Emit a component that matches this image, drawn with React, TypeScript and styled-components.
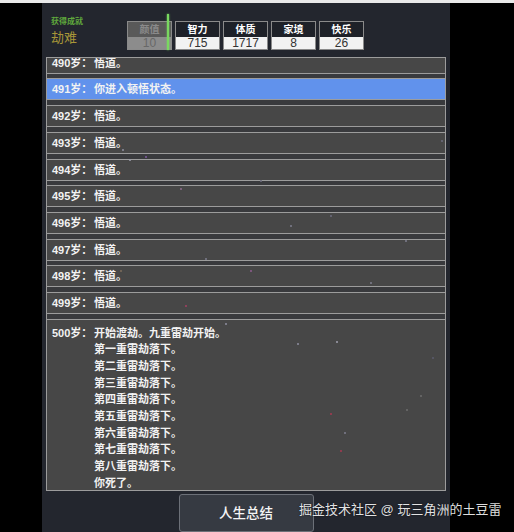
import React from 'react';
import styled, { createGlobalStyle } from 'styled-components';

const GlobalStyle = createGlobalStyle`
  html, body {
    margin: 0;
    padding: 0;
    background: #000;
    overflow: hidden;
  }
  body {
    font-family: "Liberation Sans", "Noto Sans CJK SC", sans-serif;
  }
`;

const stats = [
  { label: '颜值', value: 10, dim: true },
  { label: '智力', value: 715 },
  { label: '体质', value: 1717 },
  { label: '家境', value: 8 },
  { label: '快乐', value: 26 },
];

const events: { age: number; lines: string[]; active?: boolean }[] = [
  { age: 490, lines: ['悟道。'] },
  { age: 491, lines: ['你进入顿悟状态。'], active: true },
  { age: 492, lines: ['悟道。'] },
  { age: 493, lines: ['悟道。'] },
  { age: 494, lines: ['悟道。'] },
  { age: 495, lines: ['悟道。'] },
  { age: 496, lines: ['悟道。'] },
  { age: 497, lines: ['悟道。'] },
  { age: 498, lines: ['悟道。'] },
  { age: 499, lines: ['悟道。'] },
  {
    age: 500,
    lines: [
      '开始渡劫。九重雷劫开始。',
      '第一重雷劫落下。',
      '第二重雷劫落下。',
      '第三重雷劫落下。',
      '第四重雷劫落下。',
      '第五重雷劫落下。',
      '第六重雷劫落下。',
      '第七重雷劫落下。',
      '第八重雷劫落下。',
      '你死了。',
    ],
  },
];

const sparks = [
  [122, 149, '#8a8a9a'], [129, 159, '#9a9aa8'], [145, 156, '#7a5a9a'], [441, 140, '#6a6a7a'],
  [180, 188, '#8a6a8a'], [205, 258, '#7a7a8a'], [185, 305, '#a04060'], [290, 225, '#7a7a8a'],
  [330, 215, '#6a6a7a'], [370, 282, '#7a7a8a'], [225, 323, '#8a8a9a'], [297, 343, '#8a8a9a'],
  [336, 341, '#9a9aa8'], [330, 413, '#a03a50'], [340, 450, '#a03a50'], [344, 432, '#7a7a8a'],
  [420, 395, '#6a6a6a'], [406, 409, '#6a6a6a'], [432, 357, '#5a5a6a'], [250, 270, '#8a5a8a'],
  [405, 240, '#7a7a8a'], [150, 420, '#6a6a6a'], [260, 180, '#6a6a7a'], [120, 270, '#7a6a5a'],
] as const;

const App = () => {
  return (
    <>
      <GlobalStyle />
      <TopBar />
      <Screen>
        <Side />
        <Panel>
          <Header>
            <Achievement>
              <small>获得成就</small>
              <span>劫难</span>
            </Achievement>
            <Stats>
              {stats.map((s) => (
                <StatBox key={s.label} $dim={s.dim}>
                  <StatLabel>{s.label}</StatLabel>
                  <StatValue>{s.value}</StatValue>
                  {s.dim && <Wipe />}
                </StatBox>
              ))}
            </Stats>
          </Header>
          <List>
            <Scroll>
              {events.map((e) => (
                <Row key={e.age} $active={e.active} $tall={e.lines.length > 1}>
                  <Age>{e.age}岁：</Age>
                  <Lines>
                    {e.lines.map((l, i) => (
                      <div key={i}>{l}</div>
                    ))}
                  </Lines>
                </Row>
              ))}
            </Scroll>
          </List>
          <Footer>
            <SummaryButton>人生总结</SummaryButton>
          </Footer>
        </Panel>
        <Side />
      </Screen>
      <Sparks width="514" height="532">
        {sparks.map(([x, y, c], i) => (
          <rect key={i} x={x} y={y} width="2" height="2" fill={c} opacity="0.8" />
        ))}
      </Sparks>
      <Watermark>掘金技术社区 @ 玩三角洲的土豆雷</Watermark>
    </>
  );
};

const TopBar = styled.div`
  height: 3px;
  background: #e9e9e9;
`;

const Screen = styled.div`
  display: flex;
  height: 529px;
`;

const Side = styled.div`
  flex: 1;
  background: #000;
  &:first-child {
    flex: 0 0 42px;
  }
`;

const Panel = styled.div`
  flex: 0 0 408px;
  background: #23262e;
  display: flex;
  flex-direction: column;
  padding: 0 4px;
  box-sizing: border-box;
`;

const Header = styled.div`
  height: 54px;
  display: flex;
  align-items: flex-start;
`;

const Achievement = styled.div`
  width: 81px;
  padding: 13px 0 0 5px;
  box-sizing: border-box;
  display: flex;
  flex-direction: column;
  small {
    font-size: 8px;
    line-height: 11px;
    font-weight: bold;
    color: #5fa83c;
  }
  span {
    margin-top: 3px;
    font-size: 13px;
    line-height: 16px;
    color: #a89638;
  }
`;

const Stats = styled.div`
  margin-top: 18px;
  display: flex;
  gap: 3px;
`;

const StatBox = styled.div<{ $dim?: boolean }>`
  position: relative;
  width: 45px;
  display: flex;
  flex-direction: column;
  & > div:first-child {
    background: ${(p) => (p.$dim ? '#595959' : '#1e2128')};
    color: ${(p) => (p.$dim ? '#8a8a8a' : '#fff')};
  }
  & > div:nth-child(2) {
    background: ${(p) => (p.$dim ? '#8c8c8c' : '#f2f2f2')};
    color: ${(p) => (p.$dim ? '#686868' : '#333')};
  }
`;

const StatLabel = styled.div`
  height: 16px;
  border: 1px solid #8a8a8a;
  border-bottom: none;
  box-sizing: border-box;
  font-size: 10px;
  font-weight: bold;
  line-height: 15px;
  text-align: center;
`;

const StatValue = styled.div`
  height: 13px;
  border: 1px solid #8a8a8a;
  border-top: none;
  box-sizing: border-box;
  font-size: 12px;
  line-height: 12px;
  text-align: center;
`;

const Wipe = styled.span`
  position: absolute;
  right: 3px;
  top: -7px;
  width: 2px;
  height: 36px;
  background: #79d860;
  box-shadow: 0 0 2px #79d860;
`;

const List = styled.div`
  height: 436px;
  border: 1px solid #9c9c9c;
  background: #393a3d;
  overflow: hidden;
  box-sizing: border-box;
`;

const Scroll = styled.div`
  margin-top: -6px;
`;

const Row = styled.div<{ $active?: boolean; $tall?: boolean }>`
  display: flex;
  height: ${(p) => (p.$tall ? 'auto' : '22px')};
  box-sizing: border-box;
  margin-bottom: 4.7px;
  padding: ${(p) => (p.$tall ? '5px 0 4px 5px' : '0 0 0 5px')};
  border-top: 1px solid #9c9c9c;
  border-bottom: 1px solid #9c9c9c;
  background: ${(p) => (p.$active ? '#6192ec' : '#474747')};
  color: #f2f2f2;
  font-size: 11px;
  font-weight: bold;
  line-height: ${(p) => (p.$tall ? '16.67px' : '20px')};
`;

const Age = styled.div`
  width: 42px;
  flex: none;
  white-space: nowrap;
`;

const Lines = styled.div`
  display: flex;
  flex-direction: column;
`;

const Footer = styled.div`
  flex: 1;
  display: flex;
  justify-content: center;
  padding-top: 3px;
`;

const SummaryButton = styled.button`
  width: 135px;
  height: 38px;
  background: #363a42;
  border: 1px solid #6c7078;
  border-radius: 3px;
  color: #f4f4f4;
  font-family: "Liberation Sans", "Noto Sans CJK SC", sans-serif;
  font-size: 13.5px;
  font-weight: 500;
  padding: 0 0 3px;
`;

const Sparks = styled.svg`
  position: absolute;
  left: 0;
  top: 0;
  pointer-events: none;
`;

const Watermark = styled.div`
  position: absolute;
  left: 299px;
  top: 501px;
  font-size: 13px;
  line-height: 18px;
  color: rgba(255, 255, 255, 0.88);
  text-shadow: 0 0 2px rgba(0, 0, 0, 0.6);
  white-space: nowrap;
`;

export default App;
